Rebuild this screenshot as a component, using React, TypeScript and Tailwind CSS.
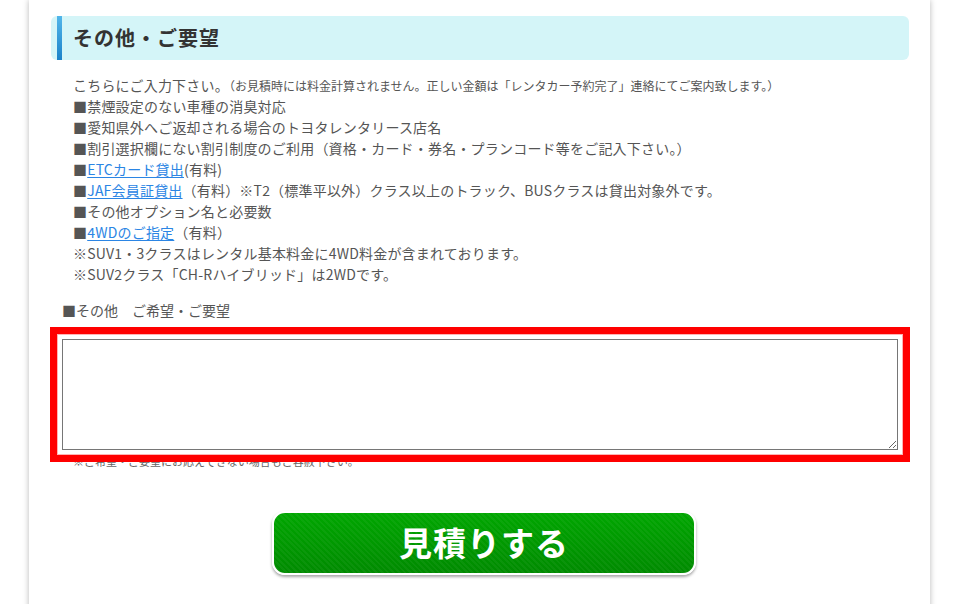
import React from "react";

const font = { fontFamily: '"Noto Sans CJK JP", "Noto Sans", sans-serif' };

function Link({ children }: { children: React.ReactNode }) {
  return <a href="#" className="text-[#2b85e4] underline underline-offset-2">{children}</a>;
}

export default function App() {
  return (
    <div className="min-h-screen bg-white overflow-hidden [font-family:'Noto_Sans_CJK_JP','Noto_Sans',sans-serif]">
      <div className="ml-[29px] w-[901px] bg-white shadow-[0_0_6px_rgba(0,0,0,0.28)] pt-[16px] pl-[22px] pr-[21px] pb-[60px]">
        {/* heading */}
        <div className="h-[44px] rounded-[6px] bg-[#d4f5f8] pl-[6px] flex items-stretch">
          <div className="w-[5px] bg-[linear-gradient(to_bottom,#52b6ea,#1b82c9)]" />
          <h2 className="pl-[11px] flex items-center text-[20px] font-bold text-[#333] tracking-[1px]">その他・ご要望</h2>
        </div>

        {/* body text */}
        <div className="mt-[15px] pl-[22px] text-[14px] leading-[21px] text-[#555] tracking-[0.2px]">
          <p>
            こちらにご入力下さい。<span className="text-[12px] tracking-normal">（お見積時には料金計算されません。正しい金額は「レンタカー予約完了」連絡にてご案内致します。）</span>
          </p>
          <p>■禁煙設定のない車種の消臭対応</p>
          <p>■愛知県外へご返却される場合のトヨタレンタリース店名</p>
          <p>■割引選択欄にない割引制度のご利用（資格・カード・券名・プランコード等をご記入下さい。）</p>
          <p>■<Link>ETCカード貸出</Link>(有料)</p>
          <p>■<Link>JAF会員証貸出</Link>（有料）※T2（標準平以外）クラス以上のトラック、BUSクラスは貸出対象外です。</p>
          <p>■その他オプション名と必要数</p>
          <p>■<Link>4WDのご指定</Link>（有料）</p>
          <p>※SUV1・3クラスはレンタル基本料金に4WD料金が含まれております。</p>
          <p>※SUV2クラス「CH-Rハイブリッド」は2WDです。</p>
        </div>

        <p className="mt-[15px] pl-[11px] text-[14px] leading-[21px] text-[#555]">■その他　ご希望・ご要望</p>

        <div className="mt-[13px] mx-[6px] border border-[#ffb3b3] p-[4px] outline-[7px] outline-solid outline-[#ff0000] relative z-10">
          <textarea className="block w-full h-[111px] border border-[#767676] bg-white" />
        </div>
        <p className="pl-[22px] -mt-[2px] text-[11px] leading-[16px] text-[#666]">※ご希望・ご要望にお応えできない場合もご容赦下さい。</p>

        {/* button */}
        <div className="mt-[42px] flex justify-center pl-[8px]">
          <button className="w-[424px] h-[64px] rounded-[13px] border-2 border-white shadow-[0_2px_3px_rgba(0,0,0,0.35)] [background-image:repeating-linear-gradient(45deg,rgba(255,255,255,0.045)_0px,rgba(255,255,255,0.045)_2px,transparent_2px,transparent_4px),linear-gradient(to_bottom,#00a600,#008a00)] flex items-center justify-center text-white font-bold text-[33px] tracking-[1px]" style={font}>
            見積りする
          </button>
        </div>
      </div>
    </div>
  );
}
